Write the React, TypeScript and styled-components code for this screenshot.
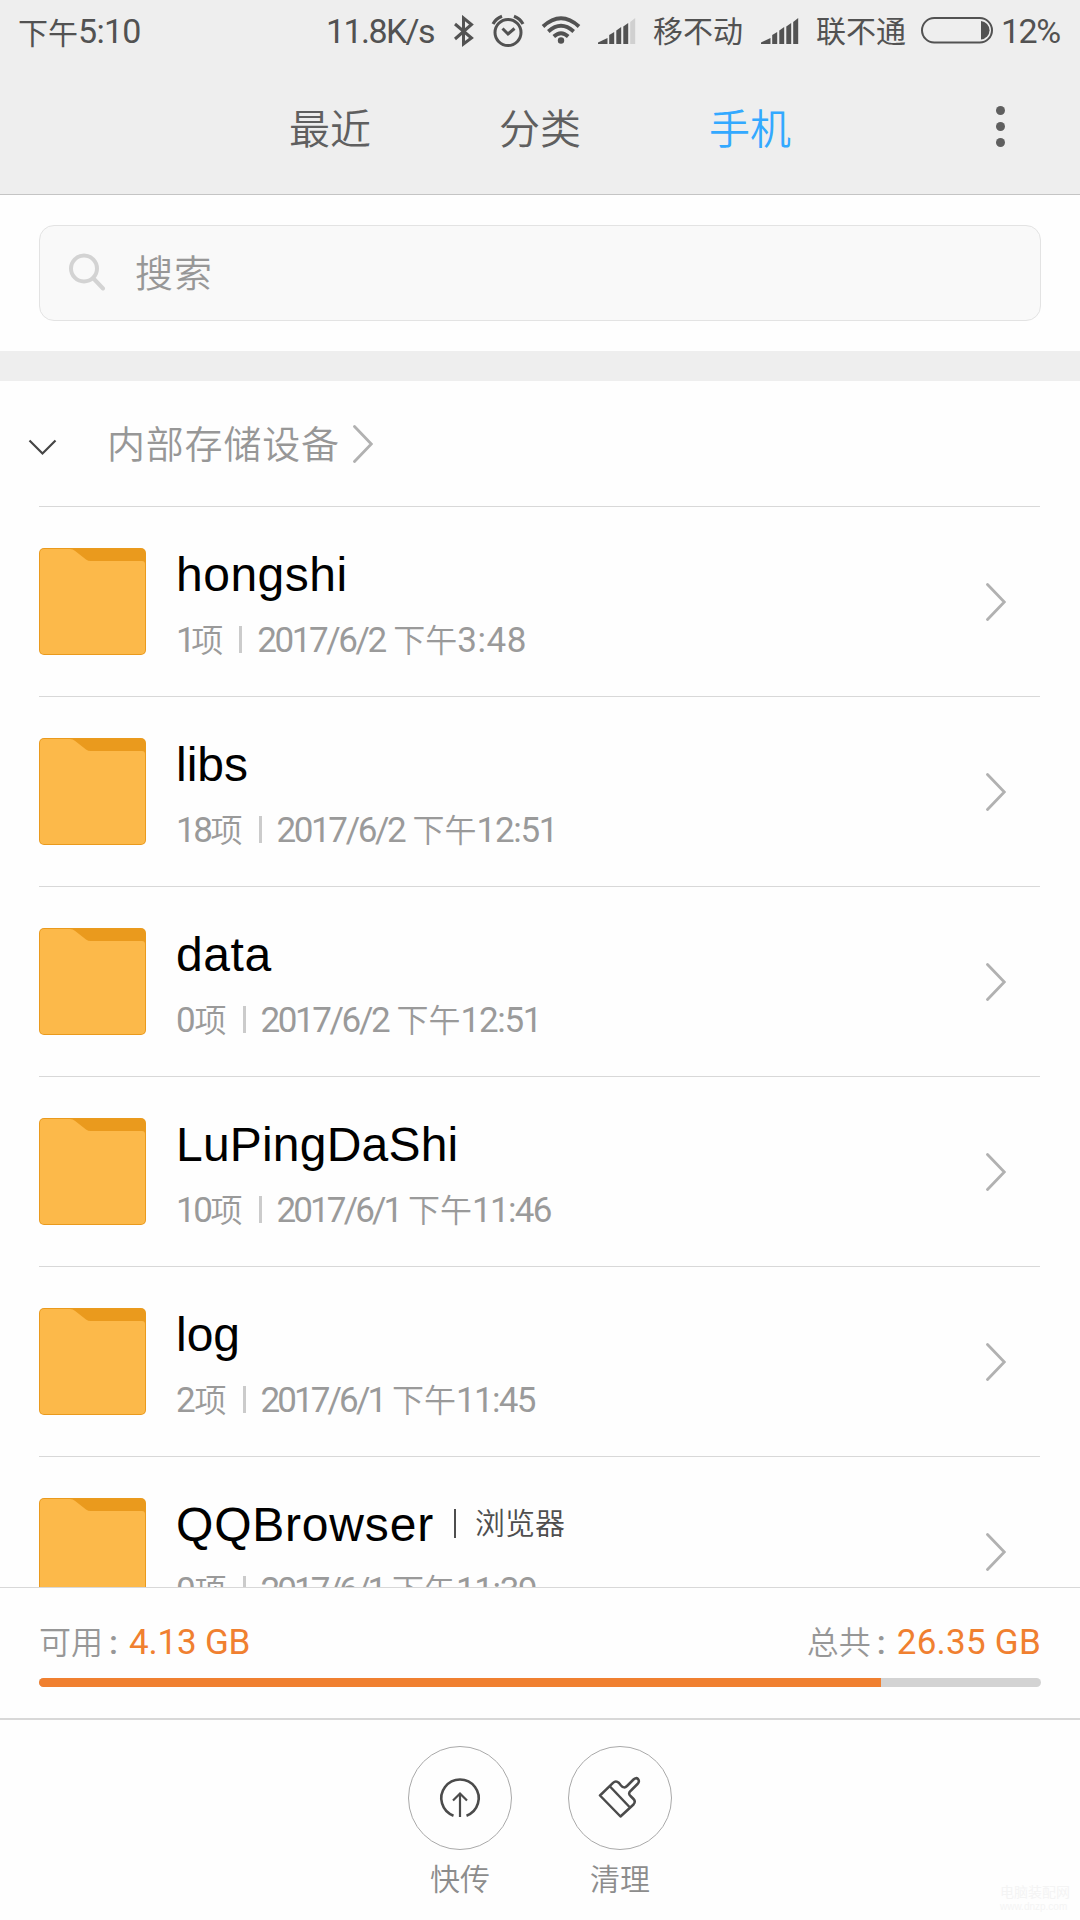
import React from "react";
import styled, { createGlobalStyle } from "styled-components";

const GlobalStyle = createGlobalStyle`
  * { box-sizing: border-box; }
  html, body { margin: 0; padding: 0; background: #fefefe; }
  body { font-family: Roboto, "Noto Sans CJK SC", sans-serif; -webkit-font-smoothing: antialiased; }
`;

const Screen = styled.div`
  width: 1080px;
  height: 1920px;
  display: flex;
  flex-direction: column;
  overflow: hidden;
  background: #fefefe;
  position: relative;
`;

const Header = styled.header`
  height: 195px;
  flex: none;
  background: #eeeeee;
  border-bottom: 1px solid #c4c4c4;
`;

const StatusBar = styled.div`
  height: 62px;
  display: flex;
  align-items: center;
  padding: 0 18px 0 18px;
  color: #525252;
`;

const StatusItem = styled.div<{ $w: number; $gap?: number; $lift?: number }>`
  width: ${(p) => p.$w}px;
  margin-left: ${(p) => p.$gap ?? 0}px;
  padding-bottom: ${(p) => p.$lift ?? 0}px;
  flex: none;
  display: flex;
  align-items: center;
  white-space: nowrap;
`;

const Spacer = styled.div`
  flex: 1;
`;

/* Chinese run */
const Han = styled.span<{ $size: number; $gap?: number; $weight?: number }>`
  font-family: "Noto Sans CJK SC", sans-serif;
  font-size: ${(p) => p.$size}px;
  letter-spacing: ${(p) => p.$gap ?? 0}px;
  font-weight: ${(p) => p.$weight ?? 400};
  line-height: 40px;
  white-space: pre;
`;

/* Latin letters and figures */
const Num = styled.span<{ $size: number; $gap?: number }>`
  font-family: Roboto, sans-serif;
  font-size: ${(p) => p.$size}px;
  letter-spacing: ${(p) => p.$gap ?? 0}px;
  font-weight: 400;
  line-height: 40px;
  white-space: pre;
`;

const TabBar = styled.nav`
  height: 132px;
  display: flex;
  justify-content: center;
  align-items: flex-start;
  padding: 36px 0 0 225px;
`;

const Tab = styled.div<{ $active?: boolean }>`
  width: 210px;
  text-align: center;
  font-family: "Noto Sans CJK SC", sans-serif;
  font-size: 41px;
  line-height: 56px;
  font-weight: 350;
  color: ${(p) => (p.$active ? "#33a9ff" : "#5f5f5f")};
`;

const MoreButton = styled.div`
  width: 225px;
  height: 60px;
  display: flex;
  flex-direction: column;
  align-items: center;
  gap: 7px;
  padding: 8px 0 0 66px;
`;

const Dot = styled.i`
  width: 9px;
  height: 9px;
  border-radius: 50%;
  background: #5f5f5f;
`;

const SearchArea = styled.div`
  height: 156px;
  flex: none;
  padding: 30px 39px;
`;

const SearchBox = styled.div`
  height: 96px;
  border: 1px solid #e3e3e3;
  border-radius: 15px;
  background: #f9f9f9;
  display: flex;
  align-items: center;
  padding: 0 0 4px 28px;
  gap: 27px;
  color: #979797;
`;

const Band = styled.div`
  height: 30px;
  flex: none;
  background: #eeeeee;
`;

const PathRow = styled.div`
  height: 125px;
  flex: none;
  display: flex;
  align-items: center;
  padding-left: 28px;
  color: #979797;
`;

const PathLabel = styled.div`
  margin: 0 13px 0 48px;
  padding-bottom: 3px;
`;

const List = styled.div`
  flex: 1;
  min-height: 0;
  overflow: hidden;
  padding: 0 40px 0 39px;
`;

const Row = styled.div`
  height: 190px;
  border-top: 1px solid #d8d8d8;
  display: flex;
  align-items: flex-start;
`;

const FolderBox = styled.div`
  margin: 41px 30px 0 0;
  width: 107px;
  height: 107px;
`;

const RowBody = styled.div`
  flex: 1;
  padding-top: 38px;
`;

const NameLine = styled.div`
  height: 60px;
  display: flex;
  align-items: center;
`;

const Name = styled.div<{ $gap: number }>`
  font-family: "Liberation Sans", Arial, sans-serif;
  font-size: 48px;
  line-height: 60px;
  letter-spacing: ${(p) => p.$gap}px;
  color: #000;
`;

const Tag = styled.div`
  display: flex;
  align-items: center;
  gap: 19px;
  margin-left: 20px;
  padding-bottom: 4px;
  color: #4e4e4e;
`;

const TagText = styled(Han)`
  padding-bottom: 5px;
`;

const Rule = styled.i<{ $dark?: boolean }>`
  width: ${(p) => (p.$dark ? 2 : 3)}px;
  height: ${(p) => (p.$dark ? 29 : 27)}px;
  background: ${(p) => (p.$dark ? "#4e4e4e" : "#cbcbcb")};
`;

const Meta = styled.div`
  height: 44px;
  margin-top: 12px;
  display: flex;
  align-items: center;
  color: #9a9a9a;
`;

const Part = styled.div`
  display: flex;
  align-items: baseline;
`;

const MetaRule = styled(Rule)`
  margin: 0 15px 0 16px;
`;

const Noon = styled(Han)`
  margin-left: 2px;
`;

const RowArrow = styled.div`
  width: 20px;
  height: 38px;
  margin: 76px 34px 0 0;
`;

const Storage = styled.section`
  height: 133px;
  flex: none;
  border-top: 1px solid #d8d8d8;
  border-bottom: 2px solid #d8d8d8;
  padding: 32px 39px 0;
`;

const StorageText = styled.div`
  display: flex;
  justify-content: space-between;
  height: 42px;
  color: #979797;
`;

const Amount = styled(Num)`
  color: #f08030;
`;

const Colon = styled.span`
  font-family: Roboto, sans-serif;
  font-weight: 500;
  font-size: 34px;
  width: 26px;
  padding-left: 6px;
`;

const Track = styled.div`
  height: 9px;
  margin-top: 16px;
  border-radius: 5px;
  background: #d3d3d3;
  overflow: hidden;
`;

const Used = styled.div`
  height: 9px;
  width: 842px;
  background: #f08030;
`;

const Actions = styled.footer`
  height: 200px;
  flex: none;
  display: flex;
  justify-content: center;
  gap: 56px;
  padding-top: 26px;
`;

const Action = styled.div`
  width: 104px;
  display: flex;
  flex-direction: column;
  align-items: center;
  color: #8c8c8c;
`;

const Circle = styled.div`
  width: 104px;
  height: 104px;
  border: 1px solid #a9a9a9;
  border-radius: 50%;
  margin-bottom: 7px;
`;

const Watermark = styled.div`
  position: absolute;
  right: 9px;
  bottom: 6px;
  width: 71px;
  color: #f4f4f4;
  font-family: "Noto Sans CJK SC", sans-serif;
  font-size: 14px;
  line-height: 17px;
  white-space: nowrap;
`;

const Url = styled.div`
  font-family: "Liberation Sans", sans-serif;
  font-size: 10px;
  line-height: 14px;
`;

const Bluetooth = () => (
  <svg width="22" height="32" viewBox="0 0 22 32" fill="none" stroke="#525252" strokeWidth="3">
    <path d="M2 9 L18.5 23 L10.500 29 V3 L18.500 9.500 L2 24" />
  </svg>
);

const Alarm = () => (
  <svg width="34" height="34" viewBox="0 0 34 34" fill="none" stroke="#525252" strokeWidth="3">
    <circle cx="17" cy="18.500" r="13" />
    <path d="M11.500 14.500 L17 20 L23.500 14.500" />
    <path d="M2 10 Q5 4.500 11 2.300 M32 10 Q29 4.500 23 2.300" strokeWidth="3.200" />
  </svg>
);

const Wifi = () => (
  <svg width="40" height="30" viewBox="0 0 40 30" fill="none" stroke="#525252" strokeWidth="3.800">
    <path d="M2 10.500 Q20 -6 38 10.500" />
    <path d="M7.300 15.500 Q20 4 32.700 15.500" />
    <path d="M12.800 20.500 Q20 14 27.200 20.500" />
    <circle cx="20" cy="24.500" r="3.200" fill="#525252" stroke="none" />
  </svg>
);

const Signal = ({ weak }: { weak?: boolean }) => (
  <svg width="38" height="27" viewBox="0 0 38 27" fill="#525252">
    <path d="M0 26 V24.500 L9.500 20 V26 Z" />
    <path d="M11.200 26 V17 L16.200 14 V26 Z" />
    <path d="M18.300 26 V12.500 L23.200 9 V26 Z" />
    <path d="M25.300 26 V8.500 L30.200 5 V26 Z" />
    <path d="M32.200 26 V4 L37.200 0 V26 Z" fill={weak ? "#d0d0d0" : "#525252"} />
  </svg>
);

const Battery = () => (
  <svg width="72" height="30" viewBox="0 0 72 30">
    <rect x="1" y="2" width="70" height="24.500" rx="12.250" fill="none" stroke="#525252" strokeWidth="2" />
    <path d="M60 5 A9.500 9.300 0 0 1 60 23.500 Z" fill="#525252" />
  </svg>
);

const SearchIcon = () => (
  <svg width="40" height="40" viewBox="0 0 40 40" fill="none" stroke="#d3d3d3" strokeWidth="4" strokeLinecap="round">
    <circle cx="16" cy="17.500" r="13" />
    <path d="M25.500 27.500 L35 37.500" />
  </svg>
);

const DownIcon = () => (
  <svg width="31" height="24" viewBox="0 0 31 24" fill="none" stroke="#454545" strokeWidth="2.200">
    <path d="M1.500 8.500 L14.500 21.500 L27.500 8.500" />
  </svg>
);

const Chevron = () => (
  <svg width="20" height="38" viewBox="0 0 20 38" fill="none" stroke="#b1b1b1" strokeWidth="2.800" strokeLinecap="round">
    <path d="M1.500 1.500 L18.300 19 L1.500 36.500" />
  </svg>
);

const Folder = () => (
  <svg width="107" height="107" viewBox="0 0 107 107">
    <rect width="107" height="107" rx="5" fill="#ea9a1d" />
    <path
      d="M5 1 H31 Q34 1 36.500 3.200 L47 11.500 Q49 13 52 13 H103 Q106 13 106 16 V102 Q106 106 102 106 H5 Q1 106 1 102 V5 Q1 1 5 1 Z"
      fill="#fcb94a"
    />
  </svg>
);

const SendIcon = () => (
  <svg width="102" height="102" viewBox="0 0 102 102" fill="none" stroke="#4b4b4b" strokeWidth="2.600">
    <path d="M44.500 68.700 A18.700 18.700 0 1 1 57.500 68.700" />
    <path d="M51 70 V46.500 M44 53.500 L51 46.500 L58 53.500" strokeWidth="2.200" />
  </svg>
);

const BrushIcon = () => (
  <svg width="102" height="102" viewBox="0 0 102 102" fill="none" stroke="#4b4b4b" strokeWidth="2.500" strokeLinejoin="round">
    <path d="M31 48.500 L44 35.800 Q47 33 50 36 L52 38.500 Q55 42 58 39 L64.500 32.500 Q67 30 69 32 Q71 34.500 68.500 37 L62 43.500 Q58.500 46.500 61.500 49 L64.500 52 Q67 54.500 64.500 57.500 L51.500 69.500 Z" />
    <path d="M41 39.500 L60.500 60" />
  </svg>
);

type Entry = {
  name: string;
  gap: number;
  count: string;
  countGap: number;
  date: string;
  dateGap: number;
  time: string;
  timeGap: number;
  tag?: string;
};

const entries: Entry[] = [
  { name: "hongshi", gap: 0.5, count: "1", countGap: -4.5, date: "2017/6/2 ", dateGap: -2.4, time: "3:48", timeGap: 0.6 },
  { name: "libs", gap: 0, count: "18", countGap: -2.4, date: "2017/6/2 ", dateGap: -2.4, time: "12:51", timeGap: -1.3 },
  { name: "data", gap: 0.6, count: "0", countGap: -1.2, date: "2017/6/2 ", dateGap: -2.4, time: "12:51", timeGap: -1.3 },
  { name: "LuPingDaShi", gap: 0.2, count: "10", countGap: -2.4, date: "2017/6/1 ", dateGap: -2.9, time: "11:46", timeGap: -1.7 },
  { name: "log", gap: 0, count: "2", countGap: -1.2, date: "2017/6/1 ", dateGap: -2.9, time: "11:45", timeGap: -1.7 },
  { name: "QQBrowser", gap: 0.8, count: "0", countGap: -1.2, date: "2017/6/1 ", dateGap: -2.9, time: "11:39", timeGap: -1.4, tag: "浏览器" },
];

const FileRow = ({ entry }: { entry: Entry }) => (
  <Row>
    <FolderBox>
      <Folder />
    </FolderBox>
    <RowBody>
      <NameLine>
        <Name $gap={entry.gap}>{entry.name}</Name>
        {entry.tag && (
          <Tag>
            <Rule $dark />
            <TagText $size={30} $weight={350}>{entry.tag}</TagText>
          </Tag>
        )}
      </NameLine>
      <Meta>
        <Part>
          <Num $size={35} $gap={entry.countGap}>{entry.count}</Num>
          <Han $size={32} $weight={350}>项</Han>
        </Part>
        <MetaRule />
        <Part>
          <Num $size={35} $gap={entry.dateGap}>{entry.date}</Num>
          <Noon $size={32} $weight={350}>下午</Noon>
          <Num $size={35} $gap={entry.timeGap}>{entry.time}</Num>
        </Part>
      </Meta>
    </RowBody>
    <RowArrow>
      <Chevron />
    </RowArrow>
  </Row>
);

export default function App() {
  return (
    <Screen>
      <GlobalStyle />
      <Header>
        <StatusBar>
          <StatusItem $w={130} $lift={1}>
            <Han $size={30}>下午</Han>
            <Num $size={34} $gap={-0.7}>5:10</Num>
          </StatusItem>
          <Spacer />
          <StatusItem $w={110}><Num $size={34} $gap={-1.6}>11.8K/s</Num></StatusItem>
          <StatusItem $w={22} $gap={17}><Bluetooth /></StatusItem>
          <StatusItem $w={34} $gap={16}><Alarm /></StatusItem>
          <StatusItem $w={40} $gap={16}><Wifi /></StatusItem>
          <StatusItem $w={38} $gap={17}><Signal weak /></StatusItem>
          <StatusItem $w={90} $gap={17} $lift={4}><Han $size={30}>移不动</Han></StatusItem>
          <StatusItem $w={38} $gap={18}><Signal /></StatusItem>
          <StatusItem $w={90} $gap={17} $lift={4}><Han $size={30}>联不通</Han></StatusItem>
          <StatusItem $w={72} $gap={15}><Battery /></StatusItem>
          <StatusItem $w={61} $gap={8}><Num $size={34} $gap={-1.5}>12%</Num></StatusItem>
        </StatusBar>
        <TabBar>
          <Tab>最近</Tab>
          <Tab>分类</Tab>
          <Tab $active>手机</Tab>
          <MoreButton>
            <Dot />
            <Dot />
            <Dot />
          </MoreButton>
        </TabBar>
      </Header>
      <SearchArea>
        <SearchBox>
          <SearchIcon />
          <Han $size={38} $gap={1} $weight={350}>搜索</Han>
        </SearchBox>
      </SearchArea>
      <Band />
      <PathRow>
        <DownIcon />
        <PathLabel><Han $size={38} $gap={0.8} $weight={350}>内部存储设备</Han></PathLabel>
        <Chevron />
      </PathRow>
      <List>
        {entries.map((e) => (
          <FileRow key={e.name} entry={e} />
        ))}
      </List>
      <Storage>
        <StorageText>
          <Part>
            <Han $size={32} $weight={350}>可用</Han>
            <Colon>:</Colon>
            <Amount $size={35} $gap={-0.2}>4.13 GB</Amount>
          </Part>
          <Part>
            <Han $size={32} $weight={350}>总共</Han>
            <Colon>:</Colon>
            <Amount $size={35} $gap={0.25}>26.35 GB</Amount>
          </Part>
        </StorageText>
        <Track>
          <Used />
        </Track>
      </Storage>
      <Actions>
        <Action>
          <Circle><SendIcon /></Circle>
          <Han $size={30} $weight={350}>快传</Han>
        </Action>
        <Action>
          <Circle><BrushIcon /></Circle>
          <Han $size={30} $weight={350}>清理</Han>
        </Action>
      </Actions>
      <Watermark>
        电脑装配网
        <Url>www.dnzp.com</Url>
      </Watermark>
    </Screen>
  );
}
